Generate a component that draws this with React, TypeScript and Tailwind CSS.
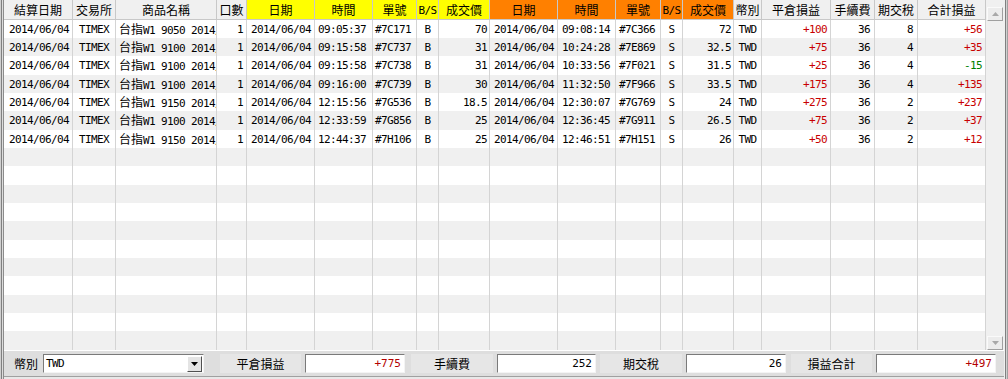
import React from 'react';

type Align = 'l' | 'c' | 'r';
type Col = { w: string; label: string; hbg: string; pad: string; latin?: boolean };

const GRAY = 'bg-[#f0f0f0]';
const YEL = 'bg-[#ffff00]';
const ORA = 'bg-[#ff8000]';

const cols: Col[] = [
  { w: 'w-[69px]', label: '結算日期', hbg: GRAY, pad: 'justify-start pl-[5px]' },
  { w: 'w-[43px]', label: '交易所', hbg: GRAY, pad: 'justify-center' },
  { w: 'w-[101px]', label: '商品名稱', hbg: GRAY, pad: 'justify-start pl-[3px]' },
  { w: 'w-[30px]', label: '口數', hbg: GRAY, pad: 'justify-end pr-[3px]' },
  { w: 'w-[68px]', label: '日期', hbg: YEL, pad: 'justify-start pl-[4px]' },
  { w: 'w-[58px]', label: '時間', hbg: YEL, pad: 'justify-start pl-[3px]' },
  { w: 'w-[44px]', label: '單號', hbg: YEL, pad: 'justify-start pl-[2px]' },
  { w: 'w-[22px]', label: 'B/S', hbg: YEL, pad: 'justify-center', latin: true },
  { w: 'w-[51px]', label: '成交價', hbg: YEL, pad: 'justify-end pr-[2px]' },
  { w: 'w-[68px]', label: '日期', hbg: ORA, pad: 'justify-start pl-[4px]' },
  { w: 'w-[58px]', label: '時間', hbg: ORA, pad: 'justify-start pl-[4px]' },
  { w: 'w-[45px]', label: '單號', hbg: ORA, pad: 'justify-start pl-[3px]' },
  { w: 'w-[22px]', label: 'B/S', hbg: ORA, pad: 'justify-center', latin: true },
  { w: 'w-[51px]', label: '成交價', hbg: ORA, pad: 'justify-end pr-[2px]' },
  { w: 'w-[28px]', label: '幣別', hbg: GRAY, pad: 'justify-center' },
  { w: 'w-[69px]', label: '平倉損益', hbg: GRAY, pad: 'justify-end pr-[3px]' },
  { w: 'w-[44px]', label: '手續費', hbg: GRAY, pad: 'justify-end pr-[4px]' },
  { w: 'w-[43px]', label: '期交稅', hbg: GRAY, pad: 'justify-end pr-[4px]' },
  { w: 'w-[68px]', label: '合計損益', hbg: GRAY, pad: 'justify-end pr-[3px]' },
];

const data = [
  ['9050', '09:05:37', '#7C171', '70', '09:08:14', '#7C366', '72', '+100', '8', '+56'],
  ['9100', '09:15:58', '#7C737', '31', '10:24:28', '#7E869', '32.5', '+75', '4', '+35'],
  ['9100', '09:15:58', '#7C738', '31', '10:33:56', '#7F021', '31.5', '+25', '4', '-15'],
  ['9100', '09:16:00', '#7C739', '30', '11:32:50', '#7F966', '33.5', '+175', '4', '+135'],
  ['9150', '12:15:56', '#7G536', '18.5', '12:30:07', '#7G769', '24', '+275', '2', '+237'],
  ['9100', '12:33:59', '#7G856', '25', '12:36:45', '#7G911', '26.5', '+75', '2', '+37'],
  ['9150', '12:44:37', '#7H106', '25', '12:46:51', '#7H151', '26', '+50', '2', '+12'],
];

const MONO = "[font-family:'DejaVu_Sans_Mono','Noto_Sans_CJK_TC',monospace]";
const CJK = "[font-family:'Noto_Sans_CJK_TC','Noto_Sans',sans-serif]";

function rowCells(d: string[]): React.ReactNode[] {
  const red = 'text-[#c80000]';
  const tot = d[9];
  return [
    '2014/06/04',
    'TIMEX',
    <span key="p">
      <span className={`${CJK} text-[12px] tracking-normal`}>台指</span>
      {`W1 9${d[0].slice(1)} 2014/06`}
    </span>,
    '1',
    '2014/06/04',
    d[1],
    d[2],
    'B',
    d[3],
    '2014/06/04',
    d[4],
    d[5],
    'S',
    d[6],
    'TWD',
    <span key="pl" className={red}>{d[7]}</span>,
    '36',
    d[8],
    <span key="t" className={tot.startsWith('-') ? 'text-[#008000]' : red}>{tot}</span>,
  ];
}

function ScrollBtn({ up }: { up: boolean }) {
  return (
    <div className="w-[16px] h-[14px] mx-[1px] flex items-center justify-center bg-[#ececec] border border-t-[#fafafa] border-l-[#fafafa] border-b-[#a0a0a0] border-r-[#a0a0a0]">
      <svg width="7" height="4" viewBox="0 0 7 4">
        {up ? <polygon points="0,4 7,4 3.5,0" fill="#a8a8a8" /> : <polygon points="0,0 7,0 3.5,4" fill="#a8a8a8" />}
      </svg>
    </div>
  );
}

function Input({ w, value, red }: { w: string; value: string; red?: boolean }) {
  return (
    <div
      className={`${w} h-[19px] shrink-0 bg-white flex items-center justify-end pr-[3px] border border-t-[#7a7a7a] border-l-[#7a7a7a] border-b-[#f4f4f4] border-r-[#f4f4f4] ${MONO} text-[11px] leading-none ${red ? 'text-[#b40000]' : 'text-black'}`}
    >
      {value}
    </div>
  );
}

function Label({ w, ml, text }: { w: string; ml: string; text: string }) {
  return (
    <div className={`${w} ${ml} h-[19px] shrink-0 flex items-center justify-center bg-[#e6e6e6] ${CJK} text-[12px] leading-none text-black`}>
      {text}
    </div>
  );
}

export default function App() {
  const rows = Array.from({ length: 18 }, (_, i) => i);
  return (
    <div className="w-[1008px] h-[379px] flex bg-white overflow-hidden text-black">
      {/* left frame */}
      <div className="flex h-full shrink-0">
        <div className="w-[1px] h-full bg-[#d0d0d0]" />
        <div className="w-[1px] h-full bg-[#808080]" />
        <div className="w-[1px] h-full bg-[#dcdcdc]" />
        <div className="w-[1px] h-full bg-[#8c8c8c]" />
      </div>

      <div className="flex flex-col w-[1000px] shrink-0">
        <div className="flex h-[350px]">
          {/* grid */}
          <div className="w-[982px] flex flex-col shrink-0">
            <div className="flex h-[20px] border-b border-[#c8c8c8]">
              {cols.map((c, i) => (
                <div
                  key={i}
                  className={`${c.w} ${c.hbg} h-full shrink-0 flex items-center justify-center pt-[1px] border-r border-[#c8c8c8] leading-none whitespace-nowrap overflow-hidden ${c.latin ? `${MONO} text-[11px] tracking-[-0.62px]` : `${CJK} text-[12px]`}`}
                >
                  {c.label}
                </div>
              ))}
            </div>
            {rows.map((r) => {
              const cells = r < data.length ? rowCells(data[r]) : null;
              return (
                <div
                  key={r}
                  className={`flex ${r % 3 === 2 ? 'h-[19px]' : 'h-[18px]'} ${r % 2 === 0 ? 'bg-white' : 'bg-[#f0f0f0]'}`}
                >
                  {cols.map((c, i) => (
                    <div
                      key={i}
                      className={`${c.w} ${c.pad} h-full shrink-0 flex items-center overflow-hidden whitespace-nowrap border-r border-[#d4d4d4] ${MONO} text-[11px] tracking-[-0.62px] leading-none`}
                    >
                      {cells ? cells[i] : null}
                    </div>
                  ))}
                </div>
              );
            })}
          </div>
          {/* scrollbar */}
          <div className="w-[18px] h-full shrink-0 bg-[#f0f0f0] flex flex-col justify-between pt-[7px]">
            <ScrollBtn up />
            <ScrollBtn up={false} />
          </div>
        </div>

        {/* footer */}
        <div className="h-[29px] flex flex-col bg-[#dedede] border-t border-white">
          <div className="h-[25px] flex items-center">
            <div className={`ml-[10px] w-[24px] shrink-0 ${CJK} text-[12px] leading-none`}>幣別</div>
            <div className="ml-[5px] w-[161px] h-[19px] shrink-0 bg-white flex items-center justify-between border border-t-[#7a7a7a] border-l-[#7a7a7a] border-b-[#f4f4f4] border-r-[#f4f4f4]">
              <span className={`pl-[2px] ${MONO} text-[11px] tracking-[-0.62px] leading-none`}>TWD</span>
              <div className="w-[15px] h-[16px] mr-[1px] flex items-center justify-center bg-[#e4e4e4] border border-t-white border-l-white border-b-[#505050] border-r-[#505050]">
                <svg width="7" height="4" viewBox="0 0 7 4">
                  <polygon points="0,0 7,0 3.5,4" fill="#000" />
                </svg>
              </div>
            </div>
            <Label w="w-[81px]" ml="ml-[16px]" text="平倉損益" />
            <div className="ml-[4px]" />
            <Input w="w-[100px]" value="+775" red />
            <Label w="w-[82px]" ml="ml-[6px]" text="手續費" />
            <div className="ml-[4px]" />
            <Input w="w-[99px]" value="252" />
            <Label w="w-[82px]" ml="ml-[4px]" text="期交稅" />
            <div className="ml-[4px]" />
            <Input w="w-[100px]" value="26" />
            <Label w="w-[81px]" ml="ml-[5px]" text="損益合計" />
            <div className="ml-[4px]" />
            <Input w="w-[120px]" value="+497" red />
          </div>
          <div className="h-[1px] bg-[#a0a0a0]" />
          <div className="h-[2px] bg-[#e8e8e8]" />
        </div>
      </div>

      {/* right frame */}
      <div className="flex h-full shrink-0">
        <div className="w-[1px] h-full bg-[#f0f0f0]" />
        <div className="w-[1px] h-full bg-[#808080]" />
        <div className="w-[1px] h-full bg-[#d0d0d0]" />
        <div className="w-[1px] h-full bg-[#a0a0a0]" />
      </div>
    </div>
  );
}
